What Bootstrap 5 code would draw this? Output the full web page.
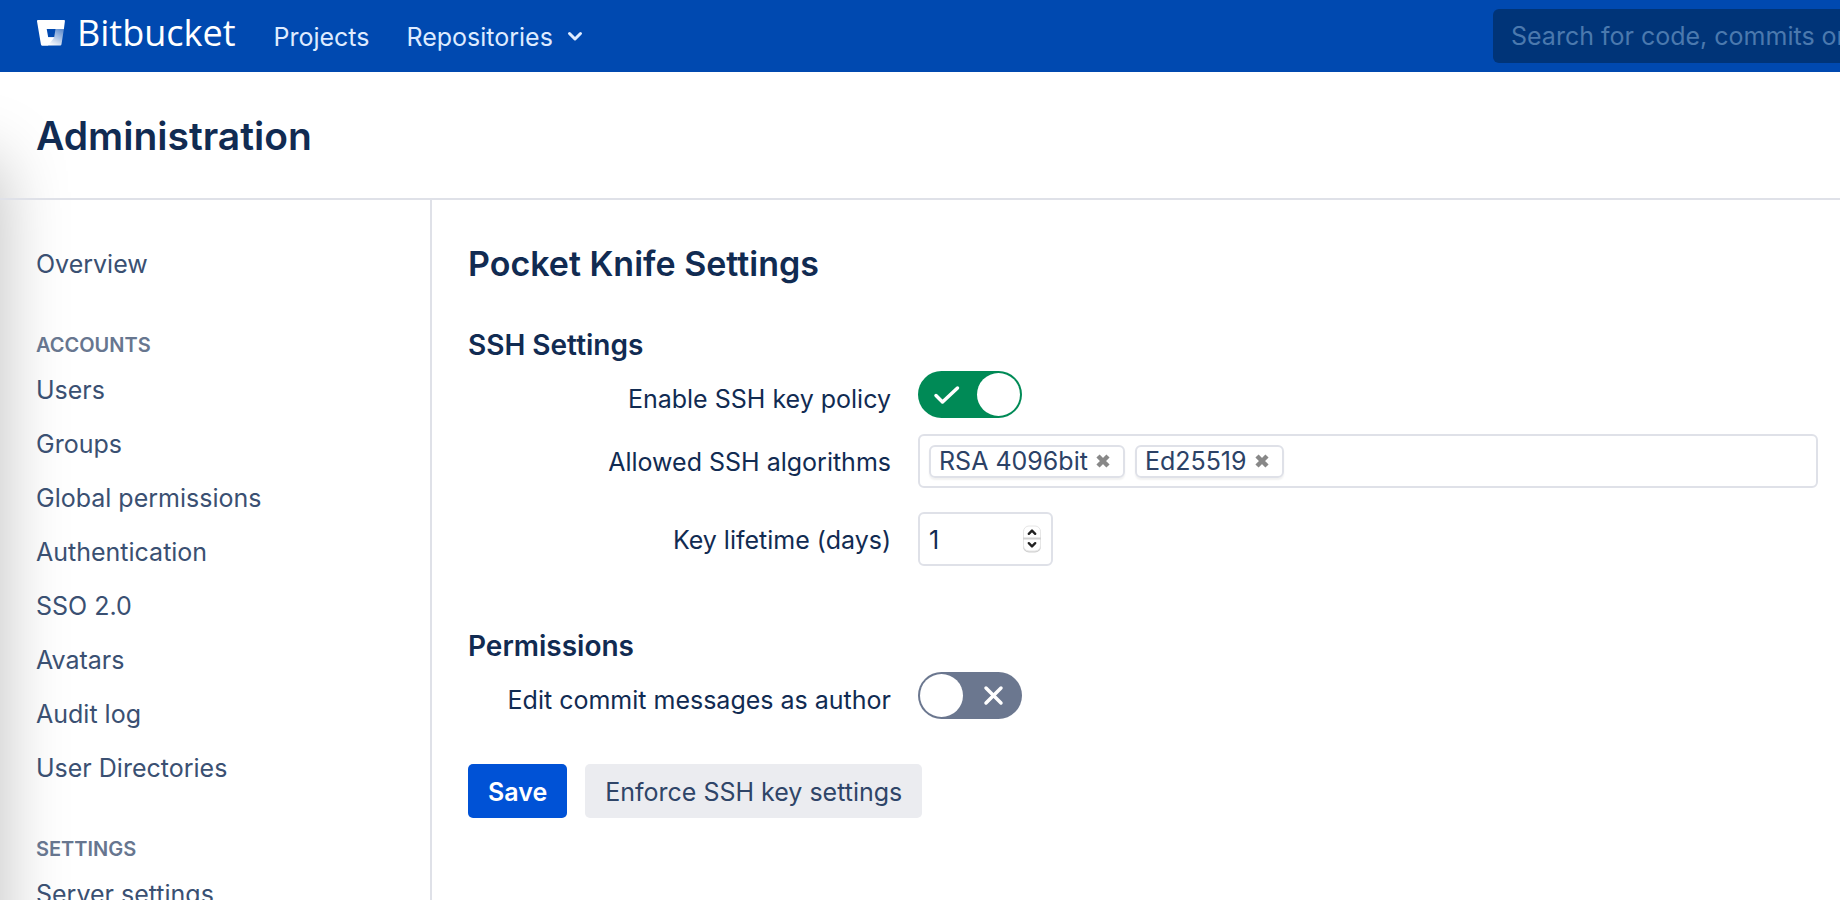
<!DOCTYPE html>
<html lang="en">
<head>
<meta charset="utf-8">
<meta name="viewport" content="width=device-width, initial-scale=1">
<title>Pocket Knife Settings - Bitbucket</title>
<link href="https://cdn.jsdelivr.net/npm/bootstrap@5.3.0/dist/css/bootstrap.min.css" rel="stylesheet">
<style>
  :root { --line: #dfe1e8; --ink: #112b52; --ink-soft: #3a5072; --ink-muted: #67768f; }
  body { font-family: Inter, "Liberation Sans", sans-serif; font-size: 25px; line-height: 34px; color: var(--ink); background: #fff; }
  .page-shell { height: 100vh; overflow: hidden; isolation: isolate; }

  /* shade that falls in from the window's left edge */
  .page-shell::before { content: ""; position: absolute; z-index: -1; top: 160px; bottom: -100px; left: -100px; width: 100px; box-shadow: 0 0 68px rgba(0, 0, 0, .26); }

  .top-bar { background: #0049b0; height: 72px; padding-left: 36px; gap: 38px; overflow: hidden; }
  .brand-link { font-family: "Open Sans", "Noto Sans", sans-serif; font-size: 36px; line-height: 40px; color: #fff; gap: 11px; padding-bottom: 6px; }
  .main-nav { gap: 37px; padding-top: 2px; }
  .top-link { color: #deebff; }
  .top-menu { gap: 14px; }
  .search-box { width: 420px; height: 54px; margin-right: -73px; padding: 0 18px; border: 0; border-radius: 6px; background: #003478; color: #deebff; font-size: 25px; }
  .search-box::placeholder { color: #4b79ae; opacity: 1; }
  .search-box:focus { background: #003478; color: #fff; }

  .title-bar { padding: 39px 36px 37px; border-bottom: 2px solid var(--line); }
  .title-bar h1 { font-size: 39px; line-height: 50px; font-weight: 600; }

  .side-menu { width: 432px; padding: 37px 36px 0; border-right: 2px solid var(--line); }
  .side-menu a { color: var(--ink-soft); padding: 10px 0; }
  .side-menu h2 { font-size: 20px; line-height: 34px; font-weight: 600; color: var(--ink-muted); padding: 37px 0 1px; text-transform: uppercase; }

  .settings { padding: 44px 22px 0 36px; }
  .settings h2 { font-size: 34px; line-height: 40px; font-weight: 600; margin-bottom: 45px; }
  .settings h3 { font-size: 28px; line-height: 32px; font-weight: 600; margin-bottom: 10px; }
  .settings h3.later { margin-top: 64px; }
  .field-label { width: 423px; padding: 11px 0 9px; text-align: right; }
  .switch-row .field-label { padding-bottom: 0; }
  .field-row { gap: 27px; }
  .boxed { height: 54px; border: 2px solid var(--line); border-radius: 6px; background: #fff; }

  .switch-row .form-check-input { width: 104px; height: 47px; margin: 0; border: 0; border-radius: 24px; background: #6b778f url("data:image/svg+xml,%3Csvg xmlns='http://www.w3.org/2000/svg' viewBox='0 0 104 47'%3E%3Ccircle cx='23.5' cy='23.5' r='21.5' fill='%23fff'/%3E%3Cpath d='M68 16l15 15m0-15l-15 15' stroke='%23fff' stroke-width='3.5' stroke-linecap='round'/%3E%3C/svg%3E") center / 104px 47px no-repeat; }
  .switch-row .form-check-input:checked { background-color: #008a56; background-image: url("data:image/svg+xml,%3Csvg xmlns='http://www.w3.org/2000/svg' viewBox='0 0 104 47'%3E%3Ccircle cx='80.5' cy='23.5' r='21.5' fill='%23fff'/%3E%3Cpath d='M18 24.5l6.500 6.500L39.500 17' fill='none' stroke='%23fff' stroke-width='3.5' stroke-linecap='round' stroke-linejoin='round'/%3E%3C/svg%3E"); }

  .tag-list { padding: 0 9px; gap: 10px; }
  .tag { height: 33px; padding: 0 13px 0 8px; gap: 8px; border: 2px solid var(--line); border-radius: 6px; box-shadow: 0 2px 2px rgba(0, 0, 0, .06); line-height: 29px; color: #2c4266; }
  .tag button { border: 0; padding: 0; background: none; color: #888; }
  .tag-entry { min-width: 0; outline: 0; }

  .days-box { width: 135px; padding: 0 9px; }
  .days-box input { width: 80px; border: 0; padding: 2px 0 0; outline: 0; color: inherit; appearance: textfield; -moz-appearance: textfield; }
  .days-box input::-webkit-inner-spin-button { appearance: none; -webkit-appearance: none; margin: 0; }

  .actions { gap: 18px; margin-top: 45px; }
  .act { height: 54px; padding: 2px 20px 0; border: 0; border-radius: 5px; font-size: 25px; line-height: 34px; }
  .act-save { background: #0052d6; color: #fff; font-weight: 600; }
  .act-plain { background: #ebecf0; color: #2f4568; }
</style>
</head>
<body>
<div class="page-shell position-relative d-flex flex-column">

  <header class="top-bar d-flex align-items-center flex-shrink-0">
    <a href="#" class="brand-link d-flex align-items-center text-decoration-none">
      <svg width="30" height="26" viewBox="0 0 30 26" aria-hidden="true">
        <defs>
          <linearGradient id="fold" x1="1" y1="0" x2="0.3" y2="0.9">
            <stop offset="0.1" stop-color="#fff" stop-opacity=".4"/>
            <stop offset="1" stop-color="#fff"/>
          </linearGradient>
        </defs>
        <path fill="#fff" d="M1.900 0H28.100Q29.100 0 28.900 1.200L27.900 9H10.700L12.200 17.200H18.400L12 25.500H6.200Q5.100 25.500 4.900 24.300L1 1.200Q.9 0 1.900 0Z"/>
        <path fill="url(#fold)" d="M19.500 9H27.900L25.500 24.300Q25.300 25.500 24.200 25.500H6.200Q5.600 25.500 5.300 25.100L12.200 17.200H18.200Z"/>
      </svg>
      Bitbucket
    </a>
    <nav class="main-nav d-flex align-items-center" aria-label="Main">
      <a href="#" class="top-link text-decoration-none">Projects</a>
      <a href="#" class="top-link top-menu text-decoration-none d-flex align-items-center">Repositories
        <svg width="16" height="12" viewBox="0 0 16 12" fill="none" stroke="currentColor" stroke-width="3" stroke-linecap="round" stroke-linejoin="round" aria-hidden="true"><path d="M2.500 2.500L8 8l5.500-5.500"/></svg>
      </a>
    </nav>
    <input class="search-box form-control flex-shrink-0 ms-auto" type="search" placeholder="Search for code, commits or repositories..." aria-label="Search">
  </header>

  <div class="title-bar flex-shrink-0"><h1 class="m-0">Administration</h1></div>

  <div class="d-flex flex-grow-1">
    <nav class="side-menu flex-shrink-0 d-flex flex-column" aria-label="Administration">
      <a href="#" class="text-decoration-none">Overview</a>
      <h2 class="m-0">Accounts</h2>
      <a href="#" class="text-decoration-none">Users</a>
      <a href="#" class="text-decoration-none">Groups</a>
      <a href="#" class="text-decoration-none">Global permissions</a>
      <a href="#" class="text-decoration-none">Authentication</a>
      <a href="#" class="text-decoration-none">SSO 2.0</a>
      <a href="#" class="text-decoration-none">Avatars</a>
      <a href="#" class="text-decoration-none">Audit log</a>
      <a href="#" class="text-decoration-none">User Directories</a>
      <h2 class="m-0">Settings</h2>
      <a href="#" class="text-decoration-none">Server settings</a>
    </nav>

    <main class="settings flex-grow-1">
      <h2>Pocket Knife Settings</h2>
      <form>
        <h3>SSH Settings</h3>
        <div class="field-row switch-row d-flex mb-3">
          <label class="field-label" for="policy">Enable SSH key policy</label>
          <div class="form-switch p-0 d-flex"><input class="form-check-input" type="checkbox" role="switch" id="policy" checked></div>
        </div>
        <div class="field-row d-flex mb-4">
          <label class="field-label" for="algos">Allowed SSH algorithms</label>
          <div class="boxed tag-list flex-grow-1 d-flex align-items-center">
            <span class="tag d-flex align-items-center">RSA 4096bit
              <button type="button" class="d-flex" aria-label="Remove RSA 4096bit"><svg width="14" height="14" viewBox="0 0 14 14" stroke="currentColor" stroke-width="4.500" aria-hidden="true"><path d="M2 2l10 10M12 2L2 12"/></svg></button>
            </span>
            <span class="tag d-flex align-items-center">Ed25519
              <button type="button" class="d-flex" aria-label="Remove Ed25519"><svg width="14" height="14" viewBox="0 0 14 14" stroke="currentColor" stroke-width="4.500" aria-hidden="true"><path d="M2 2l10 10M12 2L2 12"/></svg></button>
            </span>
            <input id="algos" type="text" class="tag-entry border-0 flex-grow-1 p-0">
          </div>
        </div>
        <div class="field-row d-flex">
          <label class="field-label" for="days">Key lifetime (days)</label>
          <div class="boxed days-box d-flex align-items-center justify-content-between">
            <input id="days" type="number" value="1">
            <svg width="20" height="28" viewBox="0 0 20 28" class="flex-shrink-0" aria-hidden="true">
              <rect x="1" y="2" width="18" height="25.500" rx="6" fill="#d0d0d0"/>
              <rect x="1.500" y="1" width="17" height="25" rx="5.500" fill="#fff" stroke="#e6e6e6"/>
              <path d="M1 13.500h18" stroke="#d2d2d2" stroke-width="2"/>
              <path d="M6.800 8.800L10 5.600l3.200 3.200M6.800 18.200l3.200 3.200 3.200-3.200" fill="none" stroke="#222" stroke-width="2.400" stroke-linecap="round" stroke-linejoin="round"/>
            </svg>
          </div>
        </div>

        <h3 class="later">Permissions</h3>
        <div class="field-row switch-row d-flex">
          <label class="field-label" for="edit">Edit commit messages as author</label>
          <div class="form-switch p-0 d-flex"><input class="form-check-input" type="checkbox" role="switch" id="edit"></div>
        </div>

        <div class="actions d-flex">
          <button type="submit" class="btn act act-save">Save</button>
          <button type="button" class="btn act act-plain">Enforce SSH key settings</button>
        </div>
      </form>
    </main>
  </div>
</div>
<script src="https://cdn.jsdelivr.net/npm/bootstrap@5.3.0/dist/js/bootstrap.bundle.min.js"></script>
</body>
</html>
